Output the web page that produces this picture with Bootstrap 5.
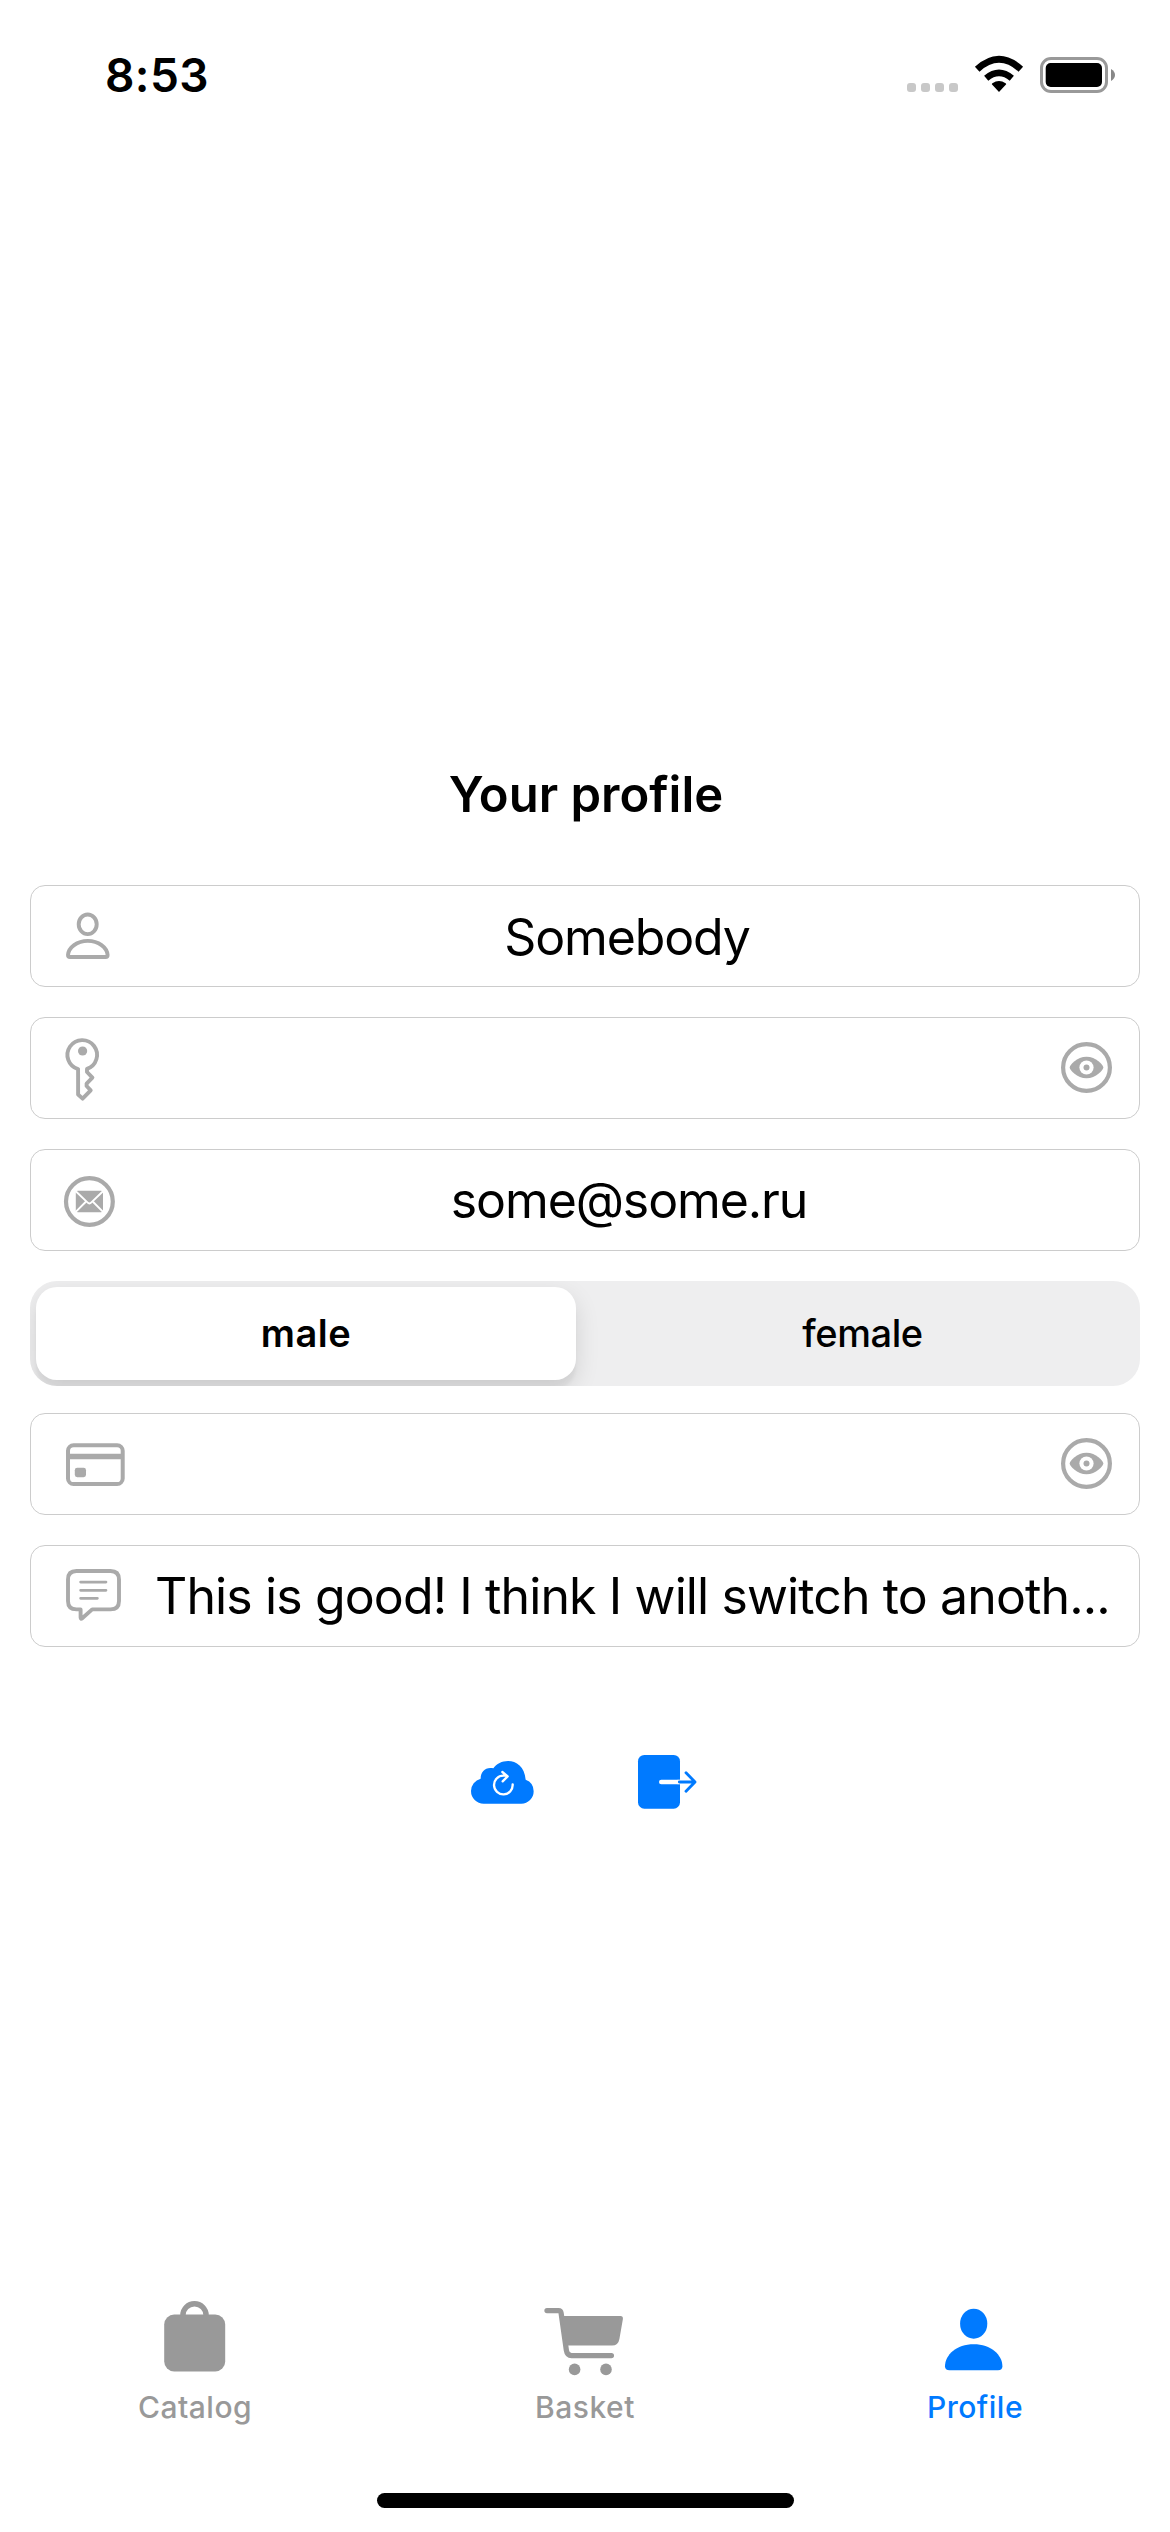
<!DOCTYPE html>
<html lang="en">
<head>
<meta charset="utf-8">
<meta name="viewport" content="width=device-width, initial-scale=1">
<title>Your profile</title>
<link href="https://cdn.jsdelivr.net/npm/bootstrap@5.3.0/dist/css/bootstrap.min.css" rel="stylesheet">
<style>
  body { font-family: Inter, "Liberation Sans", sans-serif; color: #000; background: #fff; }
  svg { display: block; flex: none; overflow: visible; }
  .screen { width: 1170px; height: 2532px; overflow: hidden; }
  .status-bar { height: 150px; padding: 0 50px 0 105px; }
  .clock { font-size: 46px; font-weight: 600; line-height: 150px; letter-spacing: .4px; }
  .profile-form { padding: 615px 30px 0; }
  .profile-title { font-size: 49px; font-weight: 600; line-height: 60px; margin: 0 0 60px; padding-left: 2px; }
  .field { height: 102px; margin-bottom: 30px; border: 1px solid #ccc; border-radius: 15px; color: #aaa; overflow: hidden; }
  .field-value { color: #000; font-size: 50px; line-height: 100px; letter-spacing: -1.12px; padding: 1px 36px 0 20px; white-space: nowrap; min-width: 0; }
  .field-value.nudge { padding-top: 0; padding-right: 32px; }
  .field-value.long { letter-spacing: -.88px; padding: 0 0 0 24px; }
  .segments { height: 105px; margin-bottom: 27px; padding: 6px; background: #eeeeef; border-radius: 27px; overflow: hidden; font-size: 38px; line-height: 93px; }
  .segment-on { width: 540px; background: #fff; border-radius: 21px; font-weight: 600; letter-spacing: .5px; box-shadow: 0 9px 24px rgba(0,0,0,.12), 0 9px 3px rgba(0,0,0,.04); }
  .segment-off { font-weight: 500; letter-spacing: -.44px; padding-left: 15px; }
  .form-actions { gap: 104px; margin-top: 108px; padding-left: 441px; color: #007aff; }
  .tab-bar { height: 234px; color: #999; }
  .tab-link { font-size: 30px; font-weight: 500; line-height: 50px; letter-spacing: .5px; }
  .tab-link.active { color: #007aff; }
  .home-bar { width: 417px; height: 15px; border-radius: 8px; background: #000; margin-top: 61px; }
</style>
<script src="https://cdn.jsdelivr.net/npm/bootstrap@5.3.0/dist/js/bootstrap.bundle.min.js"></script>
</head>
<body>
<div class="screen d-flex flex-column">

  <header class="status-bar d-flex justify-content-between align-items-center">
    <div class="clock">8:53</div>
    <svg width="220" height="50" viewBox="900 49 220 50">
      <g fill="#c8c8c8"><rect x="907" y="82" width="9" height="9" rx="3"/><rect x="921" y="82" width="9" height="9" rx="3"/><rect x="935" y="82" width="9" height="9" rx="3"/><rect x="949" y="82" width="9" height="9" rx="3"/></g>
      <path d="M999 91 L991.8 83.2 Q991.8 82.6 992.4 82.2 Q999 77.6 1005.6 82.2 Q1006.2 82.6 1006.2 83.2Z"/>
      <path d="M986.2 77.2 Q999 66.6 1011.8 77.2" fill="none" stroke="#000" stroke-width="6.6"/>
      <path d="M977.2 68.2 Q999 48.4 1020.8 68.2" fill="none" stroke="#000" stroke-width="6.8"/>
      <rect x="1041.5" y="57.5" width="65" height="33" rx="9.5" fill="none" stroke="#999" stroke-width="3"/>
      <rect x="1045.7" y="62" width="56.3" height="24" rx="5"/>
      <path d="M1111 68 Q1115 70.5 1115 74 T1111 80Z" fill="#888"/>
    </svg>
  </header>

  <main class="profile-form">
    <h1 class="profile-title text-center">Your profile</h1>

    <div class="field d-flex">
      <svg width="100" height="100" viewBox="1 1 100 100" fill="none" stroke="currentColor" stroke-width="3.9">
        <ellipse cx="57.7" cy="39.3" rx="9" ry="9.8"/>
        <path d="M40 72 Q38 72 38 70 C38.6 62.4 47 55.9 57.8 55.9 S77 62.4 77.6 70 Q77.6 72 75.6 72Z"/>
      </svg>
      <div class="field-value flex-fill text-center">Somebody</div>
    </div>

    <div class="field d-flex justify-content-between">
      <svg width="100" height="100" viewBox="1 1 100 100" fill="none" stroke="currentColor" stroke-width="3.9" stroke-linejoin="round">
        <path d="M57 51.9 A14.8 14.8 0 1 0 48.1 52.1 V77.5 L52.6 81.6 L60.7 73.3 L56.6 69 V66.6 L62.4 60.7 L57 55Z"/>
        <path d="M50.1 53H55" stroke="#fff" stroke-width="8"/>
        <circle cx="52.6" cy="34" r="4.6" fill="currentColor" stroke="none"/>
      </svg>
      <svg width="80" height="100" viewBox="0 1 80 100">
        <circle cx="27.5" cy="50.5" r="23.4" fill="none" stroke="currentColor" stroke-width="4.2"/>
        <path d="M10.7 50.5 C10.7 48 18 39.7 27.5 39.7 S44.3 48 44.3 50.5 S37 61.3 27.5 61.3 S10.7 53 10.7 50.5Z" fill="currentColor"/>
        <circle cx="27.5" cy="50.5" r="7.1" fill="#fff"/><circle cx="27.5" cy="50.5" r="3" fill="currentColor"/>
      </svg>
    </div>

    <div class="field d-flex">
      <svg width="100" height="100" viewBox="1 1 100 100">
        <circle cx="59.4" cy="52.5" r="23.4" fill="none" stroke="currentColor" stroke-width="4.2"/>
        <rect x="45.8" y="41.8" width="27.2" height="21.4" rx="2" fill="currentColor"/>
        <path d="M45 41.5 L57.4 53.4 Q59.4 55.4 61.4 53.4 L73.8 41.5 M45 63.6 L55.6 53 M73.8 63.6 L63.2 53" fill="none" stroke="#fff" stroke-width="1.9"/>
      </svg>
      <div class="field-value nudge flex-fill text-center">some@some.ru</div>
    </div>

    <div class="segments d-flex text-center">
      <div class="segment-on">male</div>
      <div class="segment-off flex-fill">female</div>
    </div>

    <div class="field d-flex justify-content-between">
      <svg width="100" height="100" viewBox="1 1 100 100">
        <rect x="38" y="32.2" width="54.7" height="38.8" rx="5.6" fill="none" stroke="currentColor" stroke-width="4"/>
        <path d="M37 40.8H93.7V46.2H37Z" fill="currentColor"/>
        <rect x="44.8" y="54.8" width="11.2" height="9.4" rx="2.4" fill="currentColor"/>
      </svg>
      <svg width="80" height="100" viewBox="0 1 80 100">
        <circle cx="27.5" cy="50.5" r="23.4" fill="none" stroke="currentColor" stroke-width="4.2"/>
        <path d="M10.7 50.5 C10.7 48 18 39.7 27.5 39.7 S44.3 48 44.3 50.5 S37 61.3 27.5 61.3 S10.7 53 10.7 50.5Z" fill="currentColor"/>
        <circle cx="27.5" cy="50.5" r="7.1" fill="#fff"/><circle cx="27.5" cy="50.5" r="3" fill="currentColor"/>
      </svg>
    </div>

    <div class="field d-flex">
      <svg width="100" height="100" viewBox="1 1 100 100" fill="none" stroke="currentColor" stroke-linecap="round" stroke-linejoin="round">
        <path stroke-width="3.9" d="M46.5 26 H80.5 Q89 26 89 34.5 V56 Q89 64.4 80.5 64.4 H62.2 L52.2 73.3 Q50.6 74.4 50.6 72.6 V64.4 H46.5 Q38 64.4 38 56 V34.5 Q38 26 46.5 26Z"/>
        <path stroke-width="2.7" d="M50.6 37.1H76 M50.6 45.3H76 M50.6 53.3H67.4"/>
      </svg>
      <div class="field-value long">This is good! I think I will switch to anoth...</div>
    </div>

    <div class="form-actions d-flex">
      <svg width="63" height="54" viewBox="63 76 189 162">
        <path fill="currentColor" d="M101 222 A38 38 0 0 1 63 184 A38 38 0 0 1 92 147 C92 124 108 111 130 116 C152 82 222 82 227 150 A37 37 0 0 1 251 185 A37 37 0 0 1 214 222Z"/>
        <path d="M188 164 A28 28 0 1 1 160 138 H169 M157 127 L173 140 L158 155" fill="none" stroke="#fff" stroke-width="7" stroke-linecap="round" stroke-linejoin="round"/>
      </svg>
      <svg width="59" height="54" viewBox="564 76 177 162" fill="none" stroke-linecap="round" stroke-linejoin="round">
        <rect x="564" y="76" width="126" height="161" rx="19" fill="currentColor"/>
        <path d="M634 157H683" stroke="#fff" stroke-width="14"/><path d="M683 150H691V164H683Z" fill="#fff"/>
        <path d="M688 157H734 M708 129L735 157L708 185" stroke="currentColor" stroke-width="8.5"/>
      </svg>
    </div>
  </main>

  <footer class="tab-bar mt-auto">
    <nav class="row g-0">
      <div class="tab-link col-4 d-flex flex-column align-items-center">
        <svg width="90" height="84" viewBox="150 2298 90 84">
          <rect x="164.2" y="2314.6" width="61" height="56.8" rx="10" fill="currentColor"/>
          <path d="M182.9 2317 V2315.4 A11.6 11.6 0 0 1 206.1 2315.4 V2317" fill="none" stroke="currentColor" stroke-width="5.4"/>
        </svg>
        <span>Catalog</span>
      </div>
      <div class="tab-link col-4 d-flex flex-column align-items-center">
        <svg width="90" height="84" viewBox="540 2298 90 84" fill="currentColor">
          <path d="M547 2310.6 H558.5 Q560.8 2310.6 561.1 2313 L566.4 2350.5 Q567.2 2355.6 571.5 2355.6 H611.4" fill="none" stroke="currentColor" stroke-width="5.3" stroke-linecap="round"/>
          <path d="M562 2316 H620.5 Q623.2 2316 622.9 2319 L619.4 2339 Q618.3 2345.6 612 2345.6 H566Z"/>
          <circle cx="574.6" cy="2369.4" r="5.8"/><circle cx="606" cy="2369.4" r="5.8"/>
        </svg>
        <span>Basket</span>
      </div>
      <div class="tab-link active col-4 d-flex flex-column align-items-center">
        <svg width="90" height="84" viewBox="930 2298 90 84" fill="currentColor">
          <ellipse cx="973.7" cy="2323.7" rx="13.6" ry="15"/>
          <path d="M949.5 2370.3 Q945 2370.3 945 2366.3 C945 2355 956.5 2344.3 973.7 2344.3 S1002.4 2355 1002.4 2366.3 Q1002.4 2370.3 998 2370.3Z"/>
        </svg>
        <span>Profile</span>
      </div>
    </nav>
    <div class="home-bar mx-auto"></div>
  </footer>
</div>
</body>
</html>
